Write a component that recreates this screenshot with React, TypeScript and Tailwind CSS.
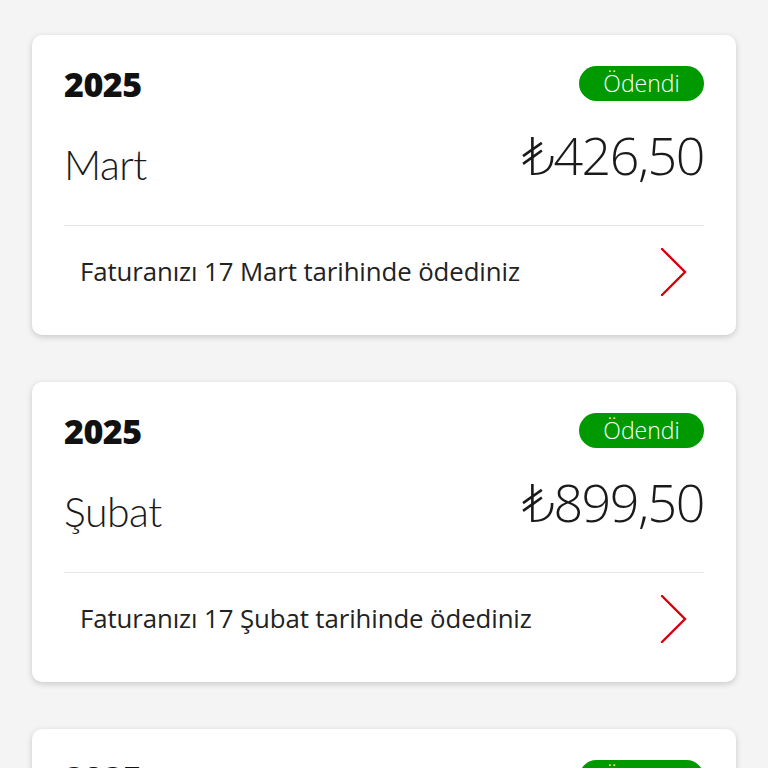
import React from "react";

type Bill = {
  year: string;
  month: string;
  amount: string;
  paidOn: string;
};

const bills: Bill[] = [
  { year: "2025", month: "Mart", amount: "426,50", paidOn: "Faturanızı 17 Mart tarihinde ödediniz" },
  { year: "2025", month: "Şubat", amount: "899,50", paidOn: "Faturanızı 17 Şubat tarihinde ödediniz" },
  { year: "2025", month: "Ocak", amount: "412,00", paidOn: "Faturanızı 17 Ocak tarihinde ödediniz" },
];

// Thin red chevron on the right of each row
function Chevron() {
  return (
    <svg width="28" height="48" viewBox="0 0 28 48" fill="none" className="shrink-0">
      <polyline points="2,1 25,24 2,47" stroke="#d7000f" strokeWidth="2.4" strokeLinecap="round" strokeLinejoin="miter" />
    </svg>
  );
}

function BillCard({ bill }: { bill: Bill }) {
  return (
    <div className="bg-white rounded-[10px] shadow-[0_2px_6px_rgba(0,0,0,0.18)] h-[300px] shrink-0 px-8 pt-[31px]">
      {/* Year + status */}
      <div className="flex items-center justify-between h-[35px]">
        <span className="text-[34px] font-extrabold leading-none text-[#111] tracking-[-0.5px]">{bill.year}</span>
        <span className="h-[35px] w-[125px] rounded-full bg-[#009a00] text-white text-[23px] font-light leading-none flex items-center justify-center">
          Ödendi
        </span>
      </div>

      {/* Month + amount */}
      <div className="flex items-start justify-between h-[124px]">
        <span className="mt-[43px] text-[41px] font-light leading-none text-[#1a1a1a] font-['Lato',sans-serif] tracking-[-0.5px]">
          {bill.month}
        </span>
        <span className="mt-[28px] text-[52px] font-light leading-none text-[#1a1a1a] tracking-[-1.5px]">
          <span className="font-['DejaVu_Sans',sans-serif] font-extralight">₺</span>
          {bill.amount}
        </span>
      </div>

      <div className="h-px bg-[#e6e6e6]" />

      {/* Paid-on row */}
      <div className="flex items-center justify-between h-[92px] px-4">
        <span className="text-[25.8px] leading-none text-[#222] tracking-[-0.1px]">{bill.paidOn}</span>
        <Chevron />
      </div>
    </div>
  );
}

export default function App() {
  return (
    <div className="h-[768px] overflow-hidden bg-[#f4f4f4] font-['Open_Sans',sans-serif]">
      <div className="flex flex-col gap-[47px] px-8 pt-[35px]">
        {bills.map((b) => (
          <BillCard key={b.month} bill={b} />
        ))}
      </div>
    </div>
  );
}
